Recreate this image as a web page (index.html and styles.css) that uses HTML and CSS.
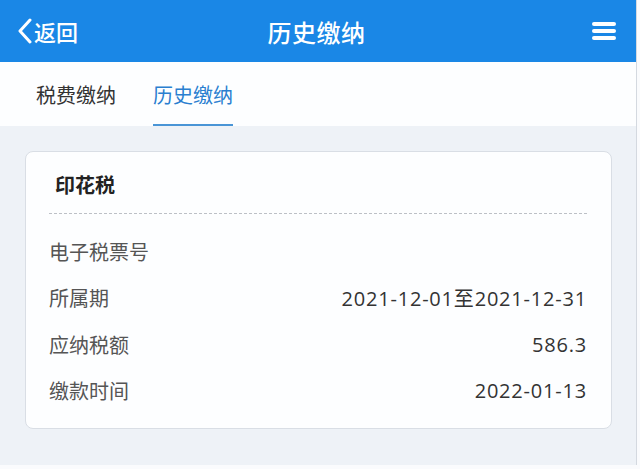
FILE: index.html
```html
<!DOCTYPE html>
<html lang="zh-CN">
<head>
  <meta charset="UTF-8" />
  <meta name="viewport" content="width=device-width, initial-scale=1.0"/>
  <title>历史缴纳</title>
  <link rel="stylesheet" href="styles.css">
</head>
<body>
  <main class="app">
    <header class="top-bar">
      <a class="back-link" href="#">
        <svg class="back-icon" viewBox="0 0 16 26" width="16" height="26" aria-hidden="true">
          <path d="M13 2 L3 13 L13 24" fill="none" stroke="#fff" stroke-width="3" stroke-linecap="round" stroke-linejoin="round"/>
        </svg>
        <span>返回</span>
      </a>
      <h1 class="top-title">历史缴纳</h1>
      <button class="menu-btn" aria-label="菜单">
        <span></span><span></span><span></span>
      </button>
    </header>

    <nav class="tabs">
      <a class="tab" href="#">税费缴纳</a>
      <a class="tab tab-active" href="#" aria-current="page">历史缴纳</a>
    </nav>

    <section class="content">
      <div class="record-card">
        <h2 class="record-title">印花税</h2>
        <dl class="record-list">
          <div class="record-row">
            <dt>电子税票号</dt>
            <dd></dd>
          </div>
          <div class="record-row">
            <dt>所属期</dt>
            <dd>2021-12-01至2021-12-31</dd>
          </div>
          <div class="record-row">
            <dt>应纳税额</dt>
            <dd>586.3</dd>
          </div>
          <div class="record-row">
            <dt>缴款时间</dt>
            <dd>2022-01-13</dd>
          </div>
        </dl>
      </div>
    </section>
  </main>
</body>
</html>
```

FILE: styles.css
```css
:root {
  --color-primary: #1a87e6;
  --color-tab-active: #2a7fd0;
  --color-text: #333;
  --color-label: #555;
  --color-bg: #eef2f7;
  --color-surface: #fdfeff;
  --color-border: #d9dee5;
}

html, body {
  margin: 0;
  padding: 0;
  background: #fafbfd;
}

body {
  font-family: "Noto Sans CJK SC", "Noto Sans", sans-serif;
  color: var(--color-text);
}

.app {
  width: 636px;
  height: 465px;
  background: var(--color-bg);
  border-right: 1px solid #d4d9e0;
  overflow: hidden;
}

.top-bar {
  height: 62px;
  background: var(--color-primary);
  display: flex;
  align-items: center;
  justify-content: space-between;
  padding: 0 20px 0 17px;
  color: #fff;
}

.back-link {
  display: flex;
  align-items: center;
  gap: 1px;
  color: #fff;
  text-decoration: none;
  font-size: 22px;
  font-weight: 500;
  width: 120px;
}

.back-icon {
  display: block;
}

.top-title {
  margin: 0;
  font-size: 24px;
  font-weight: 500;
  letter-spacing: 0.5px;
}

.menu-btn {
  width: 120px;
  background: none;
  border: none;
  padding: 0;
  display: flex;
  flex-direction: column;
  align-items: flex-end;
  gap: 3px;
  cursor: pointer;
}

.menu-btn span {
  display: block;
  width: 24px;
  height: 4px;
  border-radius: 2px;
  background: #fff;
}

.tabs {
  height: 64px;
  background: var(--color-surface);
  display: flex;
  gap: 37px;
  padding-left: 36px;
}

.tab {
  display: flex;
  align-items: center;
  font-size: 20px;
  color: var(--color-text);
  text-decoration: none;
  border-bottom: 2px solid transparent;
  box-sizing: border-box;
  padding-top: 2px;
}

.tab-active {
  color: var(--color-tab-active);
  border-bottom-color: #4a95d6;
}

.content {
  padding: 25px 24px 0 25px;
}

.record-card {
  background: var(--color-surface);
  border: 1px solid var(--color-border);
  border-radius: 8px;
  height: 278px;
  box-sizing: border-box;
  padding: 0 24px 0 23px;
}

.record-title {
  margin: 0;
  padding: 19px 0 14px 6px;
  font-size: 20px;
  line-height: 28px;
  font-weight: 700;
  color: #222;
  border-bottom: 1px dashed #bcc0c6;
}

.record-list {
  margin: 0;
  padding-top: 14px;
}

.record-row {
  display: flex;
  justify-content: space-between;
  align-items: center;
  height: 46.5px;
  font-size: 20px;
}

.record-row dt {
  color: var(--color-label);
}

.record-row dd {
  margin: 0;
  color: var(--color-text);
  font-family: "Open Sans", "Noto Sans CJK SC", sans-serif;
  letter-spacing: 0.8px;
}
```
